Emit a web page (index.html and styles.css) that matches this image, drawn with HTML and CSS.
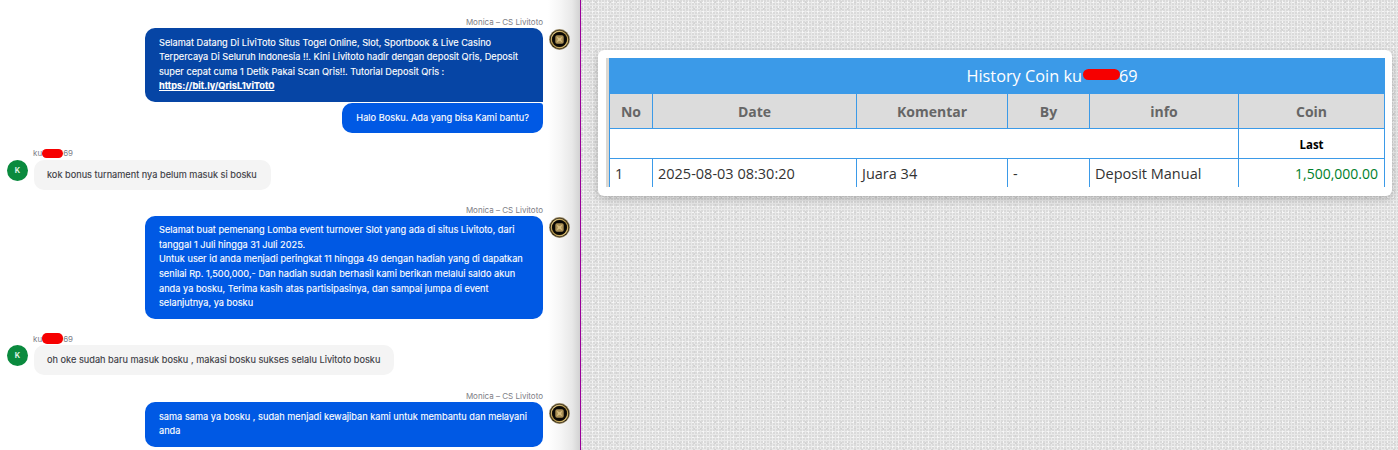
FILE: index.html
```html
<!DOCTYPE html>
<html lang="id">
<head>
<meta charset="utf-8">
<title>History Coin</title>
<link rel="stylesheet" href="styles.css">
</head>
<body>
<div class="page">
  <section class="chat">
    <div class="group agent">
      <div class="name">Monica – CS Livitoto</div>
      <div class="line">
        <div class="stack">
          <div class="bubble wide dark">Selamat Datang Di LiviToto Situs Togel Online, Slot, Sportbook &amp; Live Casino Terpercaya Di Seluruh Indonesia !!. Kini Livitoto hadir dengan deposit Qris, Deposit super cepat cuma 1 Detik Pakai Scan Qris!!. Tutorial Deposit Qris :<br><a href="#">https://bit.ly/QrisL1viTot0</a></div>
          <div class="bubble second">Halo Bosku. Ada yang bisa Kami bantu?</div>
        </div>
        <svg class="avatar" viewBox="0 0 22 22"><use href="#logo"/></svg>
      </div>
    </div>
    <div class="group user">
      <div class="name">ku<span class="blot-s"></span>69</div>
      <div class="line">
        <div class="initial">K</div>
        <div class="bubble light">kok bonus turnament nya belum masuk si bosku</div>
      </div>
    </div>
    <div class="group agent after-first">
      <div class="name">Monica – CS Livitoto</div>
      <div class="line">
        <div class="bubble wide">Selamat buat pemenang Lomba event turnover Slot yang ada di situs Livitoto, dari tanggal 1 Juli hingga 31 Juli 2025.<br>Untuk user id anda menjadi peringkat 11 hingga 49 dengan hadiah yang di dapatkan senilai Rp. 1,500,000,- Dan hadiah sudah berhasil kami berikan melalui saldo akun anda ya bosku, Terima kasih atas partisipasinya, dan sampai jumpa di event selanjutnya, ya bosku</div>
        <svg class="avatar" viewBox="0 0 22 22"><use href="#logo"/></svg>
      </div>
    </div>
    <div class="group user">
      <div class="name">ku<span class="blot-s tall"></span>69</div>
      <div class="line">
        <div class="initial">K</div>
        <div class="bubble light">oh oke sudah baru masuk bosku , makasi bosku sukses selalu Livitoto bosku</div>
      </div>
    </div>
    <div class="group agent after-second">
      <div class="name">Monica – CS Livitoto</div>
      <div class="line">
        <div class="bubble wide">sama sama ya bosku , sudah menjadi kewajiban kami untuk membantu dan melayani anda</div>
        <svg class="avatar" viewBox="0 0 22 22"><use href="#logo"/></svg>
      </div>
    </div>
  </section>
  <section class="panel">
    <div class="card">
      <div class="table-wrap">
        <table class="history">
          <colgroup>
            <col class="c-no"><col class="c-date"><col class="c-kom"><col class="c-by"><col class="c-info"><col class="c-coin">
          </colgroup>
          <thead>
            <tr class="title"><th colspan="6">History Coin ku<span class="redact-wrap"><span class="blot-l"></span></span>69</th></tr>
            <tr class="head"><th>No</th><th>Date</th><th>Komentar</th><th>By</th><th>info</th><th>Coin</th></tr>
          </thead>
          <tbody>
            <tr class="last"><td colspan="5"></td><td>Last</td></tr>
            <tr class="row"><td>1</td><td>2025-08-03 08:30:20</td><td>Juara 34</td><td>-</td><td>Deposit Manual</td><td class="amount">1,500,000.00</td></tr>
          </tbody>
        </table>
      </div>
    </div>
  </section>
</div>
<svg class="defs" width="0" height="0">
  <defs>
    <linearGradient id="ring" x1="0.1" y1="0" x2="0.9" y2="1">
      <stop offset="0" stop-color="#e8cf8a"/>
      <stop offset="0.5" stop-color="#a5873f"/>
      <stop offset="1" stop-color="#e0c67c"/>
    </linearGradient>
    <symbol id="logo" viewBox="0 0 22 22">
      <circle cx="11" cy="11" r="10.9" fill="#8a7a55"/>
      <circle cx="11" cy="11" r="10" fill="#17130b"/>
      <circle cx="11" cy="11" r="8.6" fill="none" stroke="url(#ring)" stroke-width="1.5"/>
      <circle cx="11" cy="11" r="7.6" fill="#0b0905"/>
      <rect x="6.6" y="6.6" width="8.8" height="8.8" rx="1.8" fill="#a98f55"/>
      <path d="M8 8.2 L11 9.8 L14 8.2 L12.6 11 L14 13.8 L11 12.4 L8 13.8 L9.4 11 Z" fill="#d8bf82"/>
    </symbol>
  </defs>
</svg>
</body>
</html>
```
FILE: styles.css
```css
* { box-sizing: border-box; }
html, body { margin: 0; padding: 0; height: 100%; overflow: hidden; }
body { font-family: "Inter", "Liberation Sans", sans-serif; background: #fff; }
.page { display: flex; width: 1398px; height: 450px; overflow: hidden; }

/* chat pane */
.chat {
  width: 581px; flex: none; height: 450px; overflow: hidden;
  padding: 15px 10px 0 7px;
  background: linear-gradient(to right, #fff 0, #fff 548px, #f6f6f6 560px, #e8e8e8 572px, #d2d2d2 580px);
  border-right: 1px solid #990099;
}
.group { display: flex; flex-direction: column; }
.agent { align-items: flex-end; }
.user { align-items: flex-start; margin-top: 14.7px; }
.after-first { margin-top: 12.6px; }
.after-second { margin-top: 14px; }
.name { font-size: 8px; height: 13px; line-height: 15px; color: #7d7d85; white-space: nowrap; }
.agent .name { margin-right: 27px; }
.user .name { margin-left: 26px; height: 12px; line-height: 11px; }
.line { display: flex; align-items: flex-start; }
.stack { display: flex; flex-direction: column; align-items: flex-end; gap: 1.6px; }
.bubble {
  font-size: 9.22px; line-height: 14.6px; color: #fff; background: #0059e4;
  padding: 7.7px 14px; border-radius: 10px; font-weight: 400;
  -webkit-text-stroke: 0.12px currentColor;
}
.wide { width: 398px; padding-right: 10px; }
.dark { background: #0645a5; border-bottom-right-radius: 0; }
.second { border-top-right-radius: 3px; }
.bubble a { color: #fff; font-weight: 700; text-decoration: underline; }
.light { background: #f4f4f4; color: #3a3a42; padding-left: 13px; }
.avatar { width: 21px; height: 21px; flex: none; margin-left: 6px; margin-top: 1px; }
.initial {
  width: 21px; height: 21px; border-radius: 50%; background: #0a8a3e; color: #dff3e6;
  font-size: 7.5px; font-weight: 700; line-height: 21px; text-align: center; flex: none; margin-right: 6px;
}
.blot-s { display: inline-block; width: 21px; height: 9px; background: #f60000; border-radius: 5px; vertical-align: -1.5px; }
.blot-s.tall { height: 11px; vertical-align: -2.5px; }
.defs { position: absolute; }

/* right pane */
.panel {
  flex: 1; height: 450px; padding: 50px 6px 0 17px;
  background-color: #e9e9e9;
  background-image:
    radial-gradient(circle at 1px 1px, #dadada 0.9px, transparent 1.1px),
    radial-gradient(circle at 2px 2px, #f6f6f6 0.9px, transparent 1.1px),
    radial-gradient(circle at 1px 2px, #d4d4d4 0.7px, transparent 1px);
  background-size: 3px 3px, 5px 5px, 7px 7px;
}
.card {
  background: #fff; border-radius: 6px; height: 146px; width: 794px;
  padding: 8px 0 0 8px;
  box-shadow: 0 3px 8px rgba(0,0,0,.22);
}
.table-wrap { border-left: 3px solid #dbd8d2; height: 129px; width: 779px; overflow: hidden; }
.history {
  border-collapse: collapse; table-layout: fixed; width: 775px;
  font-family: "Open Sans", "Noto Sans", sans-serif;
}
.c-no { width: 43px; } .c-date { width: 204px; } .c-kom { width: 151px; }
.c-by { width: 82px; } .c-info { width: 149px; } .c-coin { width: 146px; }
.history th, .history td { border: 1px solid #3b9ae8; padding: 0; }
.title th {
  background: #3b9ae8; color: #fff; font-size: 16.3px; font-weight: 400; height: 35px;
  padding: 0 0 0 110px; line-height: 20px;
}
.redact-wrap { display: inline-block; position: relative; width: 37px; height: 1em; }
.blot-l { position: absolute; left: 1px; top: 3px; width: 37px; height: 11px; border-radius: 6px; background: #f60000; }
.head th { background: #dcdcdc; color: #666; font-size: 14px; font-weight: 700; height: 35px; }
.last td { height: 30px; text-align: center; font-size: 11.5px; font-weight: 700; color: #000; padding-top: 1px; }
.history .row td { height: 29px; font-size: 14.5px; color: #333; padding: 0 6px 0 5px; border-bottom: 0; }
.history .row .amount { text-align: right; color: #00802b; font-size: 14px; }
```
